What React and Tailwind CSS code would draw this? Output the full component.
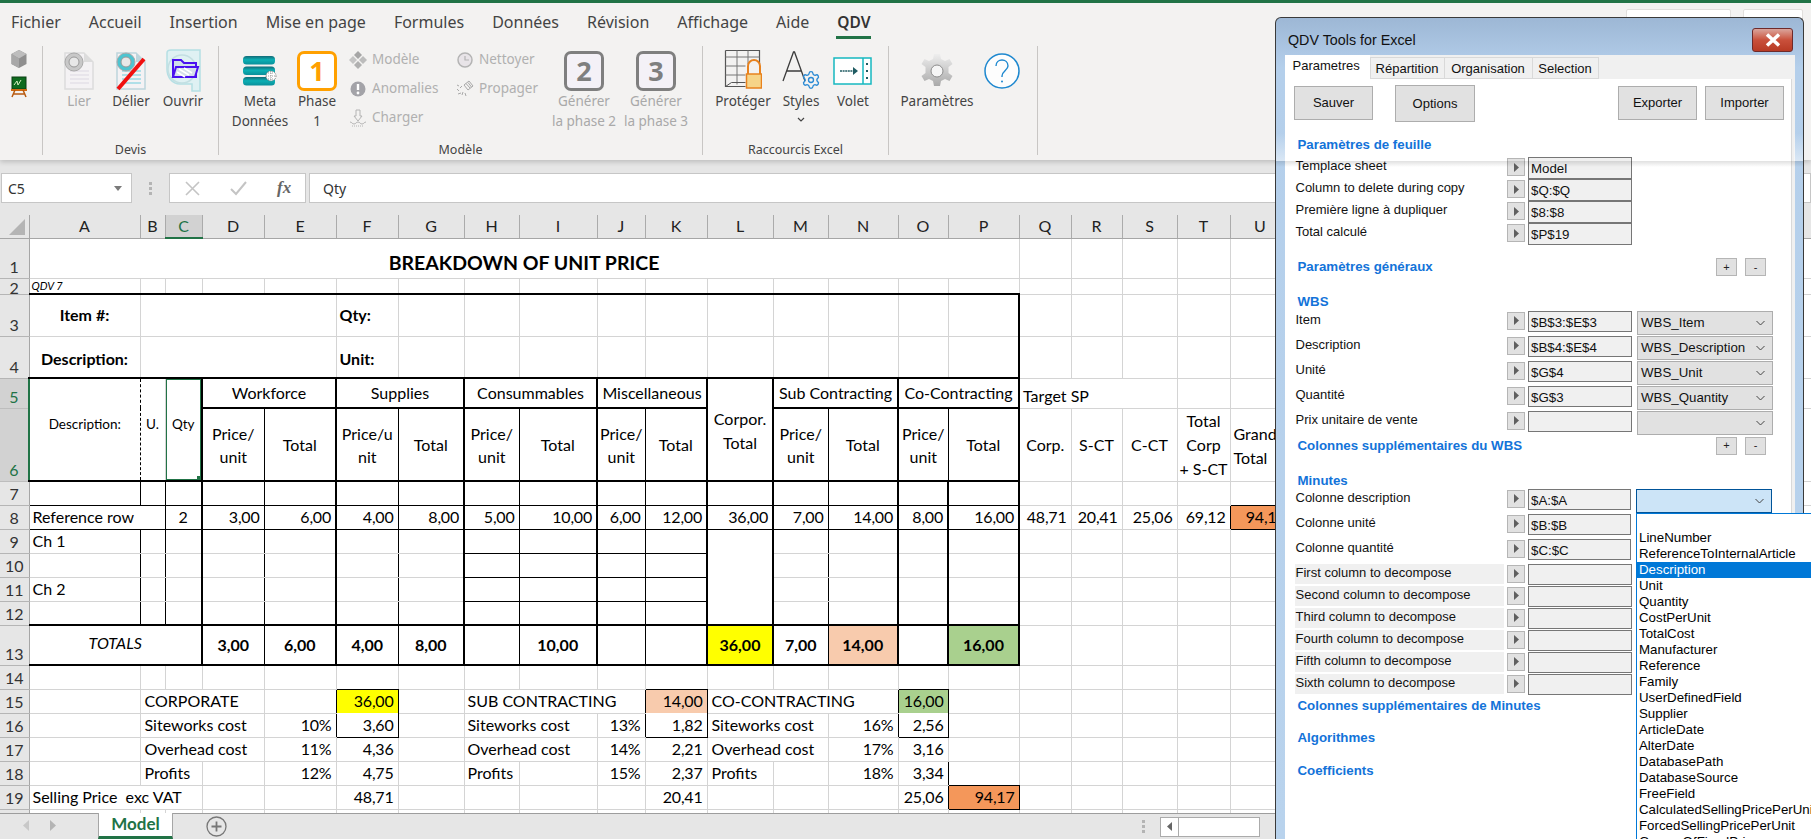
import React from 'react';
import { Settings } from 'lucide-react';

const RB = {
  g: 'border-r border-r-[#d4d4d4]',
  k: 'border-r border-r-black',
  K: 'border-r-2 border-r-black',
  d: 'border-r border-r-black [border-right-style:dashed]',
  n: 'border-r-0',
};
const BB = {
  g: 'border-b border-b-[#d4d4d4]',
  k: 'border-b border-b-black',
  K: 'border-b-2 border-b-black',
  n: 'border-b-0',
};

const cols = [
  ['A', 111], ['B', 25], ['C', 37], ['D', 62], ['E', 72], ['F', 62], ['G', 66], ['H', 55], ['I', 78], ['J', 48], ['K', 62],
  ['L', 66], ['M', 55], ['N', 70], ['O', 50], ['P', 71], ['Q', 52], ['R', 51], ['S', 55], ['T', 53], ['U', 60],
  ['V', 64], ['W', 64], ['X', 64], ['Y', 64], ['Z', 64], ['AA', 64], ['AB', 64], ['AC', 64], ['AD', 64],
];

const NUM = 'text-right pr-[4px] tracking-[-0.2px]';
const CEN = 'text-center';
const BOLD = 'font-bold text-center';

function c(t = '', r = 'g', b = 'g', cls = '', cs = 1, rs = 1, extra = null) {
  return { t, r, b, cls, cs, rs, extra };
}
const blanks = (n, r = 'g', b = 'g') => Array.from({ length: n }, () => c('', r, b));

function Cell({ d }) {
  return (
    <td
      colSpan={d.cs}
      rowSpan={d.rs}
      className={`relative p-0 overflow-hidden whitespace-pre align-middle ${RB[d.r]} ${BB[d.b]} ${d.cls}`}
    >
      {d.t}
      {d.extra}
    </td>
  );
}

function Row({ n, h, sel, cells, tall }) {
  return (
    <tr style={{ height: h }}>
      <td
        className={`p-0 text-center align-bottom leading-[18px] ${
          sel
            ? 'bg-[#d2d2d2] text-[#217346] border-r-2 border-r-[#217346] border-b border-b-[#bdbdbd]'
            : 'bg-[#e6e6e6] text-[#333] border-r border-r-[#a6a6a6] border-b border-b-[#b5b5b5]'
        } ${tall ? 'leading-[14px]' : 'pb-[2px]'} overflow-hidden`}
      >
        <div className="overflow-hidden" style={{ maxHeight: h - 1 }}>{n}</div>
      </td>
      {cells.map((d, i) => <Cell key={i} d={d} />)}
    </tr>
  );
}

const vr = ['k', 'k', 'K', 'k', 'K', 'k', 'K', 'k', 'K', 'k', 'K', 'K', 'k', 'K', 'K', 'K'];
const tail = 14;

const Price = () => <span className="block text-center leading-[23px] whitespace-normal">Price/<br />unit</span>;

const selection = (
  <>
    <span className="absolute -left-[1px] -top-[1px] -right-[1px] -bottom-[1px] border-2 border-[#217346] pointer-events-none" />
    <span className="absolute right-[-1px] bottom-[-1px] w-[5px] h-[5px] bg-[#217346]" />
  </>
);

const rows = [
  { n: 1, h: 40, cells: [c(<span className="relative top-[4px]">BREAKDOWN OF UNIT PRICE</span>, 'g', 'g', 'text-center font-bold text-[19.5px]', 16), ...blanks(tail)] },
  { n: 2, h: 16, tall: true, cells: [c('QDV 7', 'g', 'K', 'italic text-[11px] leading-none pl-[2px]'), ...blanks(15, 'g', 'K'), ...blanks(tail)] },
  { n: 3, h: 42, cells: [c('Item #:', 'g', 'g', BOLD), c('', 'g', 'g', '', 4), c('Qty:', 'g', 'g', 'font-bold pl-[3px]'), ...blanks(9), c('', 'K', 'g'), ...blanks(tail)] },
  { n: 4, h: 42, cells: [c('Description:', 'g', 'K', `${BOLD} pt-[4px]`), c('', 'g', 'K', '', 4), c('Unit:', 'g', 'K', 'font-bold pl-[3px] pt-[4px]'), ...blanks(9, 'g', 'K'), c('', 'K', 'K'), ...blanks(tail)] },
  {
    n: 5, h: 30, sel: true, cells: [
      c('Description:', 'd', 'K', 'text-center text-[13.5px] pb-[9px]', 1, 2),
      c('U.', 'g', 'K', 'text-center text-[13.5px] pb-[9px]', 1, 2),
      c('Qty', 'K', 'K', 'text-center text-[13.5px] pb-[9px]', 1, 2, selection),
      c('Workforce', 'K', 'K', CEN, 2), c('Supplies', 'K', 'K', CEN, 2), c('Consummables', 'K', 'K', CEN, 2), c('Miscellaneous', 'K', 'K', CEN, 2),
      c(<span className="block leading-[24px] whitespace-normal relative top-[1px]">Corpor.<br />Total</span>, 'K', 'K', CEN, 1, 2),
      c('Sub Contracting', 'K', 'K', CEN, 2), c('Co-Contracting', 'K', 'K', CEN, 2),
      c(<span className="relative top-[3px]">Target SP</span>, 'g', 'g', 'pl-[3px]', 3),
      ...blanks(tail - 3),
    ],
  },
  {
    n: 6, h: 71, sel: true, cells: [
      c(<Price />, 'k', 'K'), c('Total', 'K', 'K', CEN),
      c(<span className="block text-center leading-[23px]">Price/u<br />nit</span>, 'k', 'K'), c('Total', 'K', 'K', CEN),
      c(<Price />, 'k', 'K'), c('Total', 'K', 'K', CEN),
      c(<Price />, 'k', 'K'), c('Total', 'K', 'K', CEN),
      c(<Price />, 'k', 'K'), c('Total', 'K', 'K', CEN),
      c(<Price />, 'k', 'K'), c('Total', 'K', 'K', CEN),
      c('Corp.', 'g', 'g', CEN), c('S-CT', 'g', 'g', CEN), c('C-CT', 'g', 'g', CEN),
      c(<span className="block leading-[24px] whitespace-normal">Total<br />Corp<br />+ S-CT</span>, 'g', 'g', CEN),
      c(<span className="block leading-[24px] pl-[3px] relative top-[1px]">Grand<br />Total</span>, 'g', 'g'),
      ...blanks(tail - 5),
    ],
  },
  { n: 7, h: 24, cells: [...vr.map((r) => c('', r, 'k')), ...blanks(4), c('', 'g', 'k'), ...blanks(tail - 5)] },
  {
    n: 8, h: 24, cells: [
      c('Reference row', 'n', 'k', 'pl-[3px]'), c('', 'k', 'k'), c('2', 'K', 'k', CEN),
      ...[['3,00', 'k'], ['6,00', 'K'], ['4,00', 'k'], ['8,00', 'K'], ['5,00', 'k'], ['10,00', 'K'], ['6,00', 'k'], ['12,00', 'K'], ['36,00', 'K'], ['7,00', 'k'], ['14,00', 'K'], ['8,00', 'K'], ['16,00', 'K']].map(([t, r]) => c(t, r, 'k', NUM)),
      c('48,71', 'g', 'g', NUM), c('20,41', 'g', 'g', NUM), c('25,06', 'g', 'g', NUM), c('69,12', 'k', 'g', NUM),
      c('94,17', 'k', 'k', `${NUM} bg-[#f4975a]`),
      ...blanks(tail - 5),
    ],
  },
  ...[9, 10, 11, 12].map((n) => {
    const last = n === 12;
    const b0 = last ? 'K' : 'g';
    const b1 = last ? 'K' : 'k';
    const cells = [];
    vr.forEach((r, i) => {
      if (i === 11) {
        if (n === 9) cells.push(c('', r, 'K', '', 1, 4));
        return;
      }
      const t = i === 0 && n === 9 ? 'Ch 1' : i === 0 && n === 11 ? 'Ch 2' : '';
      cells.push(c(t, r, i >= 7 && i <= 10 ? b1 : b0, 'pl-[3px]'));
    });
    return { n, h: 24, cells: [...cells, ...blanks(tail)] };
  }),
  {
    n: 13, h: 40, cells: [
      c(<span className="relative -top-[2px]">TOTALS</span>, 'K', 'K', 'italic text-center', 3),
      c('3,00', 'k', 'K', BOLD), c('6,00', 'K', 'K', BOLD), c('4,00', 'k', 'K', BOLD), c('8,00', 'K', 'K', BOLD),
      c('', 'k', 'K'), c('10,00', 'K', 'K', BOLD), c('', 'k', 'K'), c('', 'K', 'K'),
      c('36,00', 'K', 'K', `${BOLD} bg-[#ffff00]`), c('7,00', 'k', 'K', BOLD), c('14,00', 'K', 'K', `${BOLD} bg-[#f8cbad]`),
      c('', 'K', 'K'), c('16,00', 'K', 'K', `${BOLD} bg-[#a9d08e]`),
      ...blanks(tail),
    ],
  },
  {
    n: 14, h: 24, cells: [
      ...blanks(5), c('', 'g', 'k'), ...blanks(4), c('', 'g', 'k'), ...blanks(3), c('', 'g', 'k'), ...blanks(1), ...blanks(tail),
    ],
  },
  {
    n: 15, h: 24, cells: [
      c(), c('CORPORATE', 'g', 'g', 'pl-[4px]', 3), c('', 'k'), c('36,00', 'k', 'n', `${NUM} bg-[#ffff00]`), c(),
      c('SUB CONTRACTING', 'k', 'g', 'pl-[3px]', 3), c('14,00', 'k', 'n', `${NUM} bg-[#f8cbad]`),
      c('CO-CONTRACTING', 'k', 'g', 'pl-[4px]', 3), c('16,00', 'k', 'n', `${NUM} bg-[#a9d08e]`), c(), ...blanks(tail),
    ],
  },
  {
    n: 16, h: 24, cells: [
      c(), c('Siteworks cost', 'g', 'g', 'pl-[4px]', 3), c('10%', 'k', 'g', NUM), c('3,60', 'k', 'k', NUM), c(),
      c('Siteworks cost', 'g', 'g', 'pl-[3px]', 2), c('13%', 'k', 'g', NUM), c('1,82', 'k', 'k', NUM),
      c('Siteworks cost', 'g', 'g', 'pl-[4px]', 2), c('16%', 'k', 'g', NUM), c('2,56', 'k', 'k', NUM), c(), ...blanks(tail),
    ],
  },
  {
    n: 17, h: 24, cells: [
      c(), c('Overhead cost', 'g', 'g', 'pl-[4px]', 3), c('11%', 'g', 'g', NUM), c('4,36', 'g', 'g', NUM), c(),
      c('Overhead cost', 'g', 'g', 'pl-[3px]', 2), c('14%', 'g', 'g', NUM), c('2,21', 'g', 'g', NUM),
      c('Overhead cost', 'g', 'g', 'pl-[4px]', 2), c('17%', 'g', 'g', NUM), c('3,16', 'g', 'g', NUM), c(), ...blanks(tail),
    ],
  },
  {
    n: 18, h: 24, cells: [
      c(), c('Profits', 'g', 'g', 'pl-[4px]', 2), c(), c('12%', 'g', 'g', NUM), c('4,75', 'g', 'g', NUM), c(),
      c('Profits', 'g', 'g', 'pl-[3px]'), c(), c('15%', 'g', 'g', NUM), c('2,37', 'g', 'g', NUM),
      c('Profits', 'g', 'g', 'pl-[4px]'), c(), c('18%', 'g', 'g', NUM), c('3,34', 'k', 'g', NUM), c('', 'g', 'k'), ...blanks(tail),
    ],
  },
  {
    n: 19, h: 24, cells: [
      c('Selling Price  exc VAT', 'g', 'g', 'pl-[3px]', 3), c(), c(), c('48,71', 'g', 'g', NUM), ...blanks(4), c('20,41', 'g', 'g', NUM),
      c(), c(), c(), c('25,06', 'k', 'g', NUM), c('94,17', 'k', 'k', `${NUM} bg-[#f4975a]`), ...blanks(tail),
    ],
  },
  { n: 20, h: 6, tall: true, cells: blanks(30, 'g', 'n') },
];

function Sheet() {
  return (
    <div className="h-[598px] overflow-hidden bg-white">
      <table className="table-fixed border-collapse w-[1781px] font-[Lato,sans-serif] text-[16px] text-black leading-none">
        <colgroup>
          <col className="w-[29px]" />
          {cols.map(([k, w]) => <col key={k} style={{ width: w }} />)}
        </colgroup>
        <tbody>
          <tr className="h-[23px]">
            <td className="p-0 bg-[#e6e6e6] border-r border-r-[#a6a6a6] border-b border-b-[#a6a6a6] relative">
              <svg className="absolute right-[4px] bottom-[3px]" width="16" height="16" viewBox="0 0 16 16"><path d="M16 0V16H0Z" fill="#b4b4b4" /></svg>
            </td>
            {cols.map(([k]) => (
              <td key={k} className={`p-0 text-center text-[16px] ${k === 'C' ? 'bg-[#d2d2d2] text-[#217346] border-r border-r-[#ababab] border-b-2 border-b-[#217346]' : 'bg-[#e6e6e6] text-[#222] border-r border-r-[#ababab] border-b border-b-[#a6a6a6]'}`}>{k}</td>
            ))}
          </tr>
          {rows.map((r) => <Row key={r.n} {...r} />)}
        </tbody>
      </table>
    </div>
  );
}

/* ------- ribbon icons ------- */
const Cube = () => (
  <svg width="18" height="20" viewBox="0 0 18 20"><path d="M9 1 16.5 5v10L9 19 1.5 15V5Z" fill="#8f8f8f" /><path d="M9 1 16.5 5 9 9.5 1.5 5Z" fill="#bdbdbd" /><path d="M9 9.5V19L1.5 15V5Z" fill="#a8a8a8" /></svg>
);
const Board = () => (
  <svg width="18" height="22" viewBox="0 0 18 22"><rect x="2" y="1" width="14" height="12" fill="#0f6b1f" stroke="#0a3f13" /><path d="M4 9 7 5l1 4 3-5" stroke="#d8f0c0" fill="none" strokeWidth="1" /><path d="M1 14h16" stroke="#d06a10" strokeWidth="2" /><path d="M5 14 2 21M13 14l3 7M3 18h12" stroke="#b85a10" strokeWidth="1.5" fill="none" /></svg>
);
const DocIcon = ({ tint = '#dcdcdc', globe = '#c8c8c8', lines = '#e4e0e8', strike }) => (
  <svg width="34" height="40" viewBox="0 0 34 40">
    <path d="M3 2h19l9 9v27H3Z" fill="#f4f2f4" stroke={tint} strokeWidth="1.5" />
    <path d="M22 2v9h9Z" fill={tint} />
    {[20, 24, 28, 32].map((y) => <path key={y} d={`M8 ${y}h19`} stroke={lines} strokeWidth="1.5" />)}
    <circle cx="12" cy="11" r="9" fill={globe} stroke="#aaa" />
    <circle cx="12" cy="11" r="5" fill="#e8e8e8" stroke="#999" />
    {strike && <path d="M4 38 30 8" stroke="#f01010" strokeWidth="4" />}
  </svg>
);
const OpenIcon = () => (
  <svg width="38" height="44" viewBox="0 0 38 44">
    <path d="M3 4C3 1 5 1 7 1h29v41h-8v-7H16C8 35 3 28 3 20Z" fill="#dff1f3" stroke="#b5dfe4" strokeWidth="1.5" />
    <circle cx="18" cy="20" r="14" fill="none" stroke="#c3dfe2" strokeWidth="1.5" />
    <path d="M9 11h8l3 3h12v14H9Z" fill="#cfe0e8" stroke="#4a10f0" strokeWidth="2" />
    <path d="M9 28l3-10h22l-3 10Z" fill="#d5dfea" stroke="#4a10f0" strokeWidth="2" />
    <path d="M15 20l10 6M13 23l8 5M20 19l8 5" stroke="#fff" strokeWidth="1.5" />
  </svg>
);
const MetaIcon = () => (
  <svg width="36" height="32" viewBox="0 0 36 32">
    <defs>
      <linearGradient id="meta" x1="0" y1="0" x2="0" y2="1"><stop offset="0" stopColor="#136a77" /><stop offset=".45" stopColor="#0bb0b4" /><stop offset="1" stopColor="#0a8f9a" /></linearGradient>
    </defs>
    {[1, 11.5, 22].map((y) => <rect key={y} x="1" y={y} width="32" height="8.5" rx="3.5" fill="url(#meta)" />)}
    <circle cx="29" cy="21" r="5" fill="#fff" stroke="#777" strokeDasharray="1 1" />
    <path d="M24 21h10M29 16v10M26 18h6M26 24h6" stroke="#777" strokeWidth=".7" strokeDasharray="1 1" />
  </svg>
);
const Phase = ({ n, on }) => (
  <div className={`w-[40px] h-[40px] rounded-[7px] border-[3px] flex items-center justify-center font-bold text-[27px] leading-none font-['Open_Sans',sans-serif] ${on ? 'border-[#ffa000] bg-white text-[#ffa000]' : 'border-[#7f7f7f] bg-[#f4f1f7] text-[#7f7f7f]'}`}>{n}</div>
);
const Diamonds = () => (
  <svg width="18" height="18" viewBox="0 0 18 18" fill="#b9b9b9"><path d="M9 0l4 4-4 4-4-4Z" fill="#a6a6a6" /><path d="M4 5l4 4-4 4-4-4Z" fill="#c4c4c4" /><path d="M14 5l4 4-4 4-4-4Z" fill="#bcbcbc" /><path d="M9 10l4 4-4 4-4-4Z" fill="#b0b0b0" /></svg>
);
const Excl = () => (
  <svg width="16" height="16" viewBox="0 0 16 16"><circle cx="8" cy="8" r="7.5" fill="#a3a3a8" /><path d="M8 3v6" stroke="#fff" strokeWidth="2.4" /><circle cx="8" cy="12" r="1.4" fill="#fff" /></svg>
);
const Charge = () => (
  <svg width="18" height="18" viewBox="0 0 18 18" fill="none" stroke="#b4b4b4"><path d="M7 1h4v6h2l-4 5-4-5h2Z" /><path d="M1 13c2 0 2 2 4 2s2-2 4-2 2 2 4 2 2-2 4-2" /><path d="M3 17h12" strokeDasharray="1 1" /></svg>
);
const Clock = () => (
  <svg width="16" height="16" viewBox="0 0 16 16"><circle cx="8" cy="8" r="7" fill="#e8e4e8" stroke="#b4b4b4" strokeWidth="1.5" /><path d="M8 4v4h4" stroke="#b4b4b4" fill="none" strokeWidth="1.2" /></svg>
);
const Scatter = () => (
  <svg width="18" height="18" viewBox="0 0 18 18" fill="none" stroke="#a8a8a8"><path d="M8 5l5-4 4 5-5 4ZM10 3.5l4 4.5M12 2.5l3.5 4.5" /><path d="M1 9l2 2M4 8l2-2M2 14l3-1M7 12l-1 3M9 13l1 3M1 5l2 1" /></svg>
);
const Protect = () => (
  <svg width="38" height="44" viewBox="0 0 38 44">
    <path d="M2 2h34v18H24v14H8l-6 6Z" fill="#f3f2f1" />
    <path d="M1.500 1.500h34v14M1.500 1.500v36h20" fill="none" stroke="#555" strokeWidth="1.2" />
    <path d="M1.500 8h34M1.500 17h20M1.500 26h20M13 1.500v34M24 1.500v14" stroke="#777" strokeWidth="1" fill="none" />
    <path d="M1.500 37.500l6-4h14" stroke="#555" fill="none" />
    <path d="M24 25v-8a6 6 0 0 1 12 0v8" fill="none" stroke="#e8821e" strokeWidth="2" />
    <rect x="22.500" y="25" width="15" height="14" fill="#f6d488" stroke="#e8821e" strokeWidth="1.5" />
  </svg>
);
const StylesIcon = () => (
  <div className="relative w-[38px] h-[38px] -mt-[2px]">
    <svg className="absolute left-0 top-0" width="24" height="31" viewBox="0 0 24 31">
      <path d="M1 30 11.500 1h1L23 30M5 20h14" fill="none" stroke="#3c3c3c" strokeWidth="1.300" />
    </svg>
    <Settings className="absolute -right-[1px] -bottom-[1px] text-[#2a8ad4]" size={20} strokeWidth={1.6} />
  </div>
);
const VoletIcon = () => (
  <svg width="40" height="28" viewBox="0 0 40 28">
    <rect x="1" y="1" width="37" height="26" fill="#fff" stroke="#16b8c0" strokeWidth="1.500" />
    <path d="M30 1v26" stroke="#16b8c0" strokeWidth="1.500" />
    <path d="M7 14h16" stroke="#1f5b62" strokeWidth="1.500" strokeDasharray="2 .6" />
    <path d="M20 10l5 4-5 4Z" fill="#1f5b62" />
    <path d="M34 6v2M34 13v2M34 20v2" stroke="#1f5b62" strokeWidth="2" />
  </svg>
);
const GearIcon = () => (
  <svg width="32" height="36" viewBox="0 0 32 36">
    <defs><linearGradient id="gear" x1="0" y1="0" x2="0" y2="1"><stop offset="0" stopColor="#eeeeee" /><stop offset="1" stopColor="#a9a9a9" /></linearGradient></defs>
    <path d="M13 1h6l1 5 4 2 4.500-2 3 5-4 3v6l4 3-3 5-4.500-2-4 2-1 5h-6l-1-5-4-2-4.500 2-3-5 4-3v-6l-4-3 3-5L8 8l4-2Z" fill="url(#gear)" />
    <circle cx="16" cy="18" r="6" fill="#f5f5f5" stroke="#8d8d8d" />
  </svg>
);
const HelpIcon = () => (
  <svg width="36" height="36" viewBox="0 0 36 36">
    <circle cx="18" cy="18" r="17" fill="#fdfdfd" stroke="#1e88cf" strokeWidth="1.500" />
    <path d="M12 13c0-4 3-6 6-6s6 2 6 6c0 4-6 5-6 10v1" fill="none" stroke="#1e88cf" strokeWidth="1.400" />
    <circle cx="18" cy="28.500" r="1" fill="#1e88cf" />
  </svg>
);

/* ------- ribbon ------- */
const Big = ({ icon, lines, w, dim }) => (
  <div className={`flex flex-col items-center shrink-0 ${w} ${dim ? 'text-[#a9a9a9]' : 'text-[#444]'}`}>
    <div className="h-[45px] flex items-center justify-center pt-[4px]">{icon}</div>
    {lines.map((l, i) => <div key={i} className="h-[20px] leading-[20px] whitespace-nowrap">{l}</div>)}
  </div>
);
const Small = ({ icon, text }) => (
  <div className="flex items-center h-[29px]">
    <div className="w-[18px] flex justify-center mr-[5px]">{icon}</div>
    <span className="text-[#b0b0b0] whitespace-nowrap">{text}</span>
  </div>
);
const Group = ({ w, label, children, lead = '' }) => (
  <div className={`${w} h-[109px] shrink-0 border-r border-r-[#c8c6c4] flex flex-col`}>
    <div className={`flex flex-1 min-h-0 ${lead}`}>{children}</div>
    {label && <div className="h-[16px] -mb-[3px] text-center text-[12.5px] text-[#444] leading-[16px]">{label}</div>}
  </div>
);

const tabs = ['Fichier', 'Accueil', 'Insertion', 'Mise en page', 'Formules', 'Données', 'Révision', 'Affichage', 'Aide'];

function Ribbon() {
  return (
    <div className="h-[160px] bg-[#f3f2f1] font-['Noto_Sans',sans-serif] relative z-10 shadow-[0_2px_5px_rgba(0,0,0,0.18)]">
      <div className="h-[3px] bg-[#217346]" />
      <div className="flex items-start gap-[28px] pl-[11px] h-[36px] text-[16px] text-[#444] pt-[8px] leading-[22px]">
        {tabs.map((t) => <span key={t}>{t}</span>)}
        <span className="font-semibold text-[#333] border-b-[3px] border-b-[#217346] h-[28px] -ml-[1px] px-[1px] text-[15.5px]">QDV</span>
      </div>
      <div className="flex pt-[7px] text-[13.500px]">
        <Group w="w-[43px]">
          <div className="flex flex-col items-center w-full pt-[3px] gap-[7px] pl-[2px] pr-[6px]"><Cube /><Board /></div>
        </Group>
        <Group w="w-[176px]" label="Devis" lead="pl-[10px]">
          <Big w="w-[52px]" dim icon={<DocIcon />} lines={['Lier']} />
          <Big w="w-[52px]" icon={<DocIcon tint="#bdd5dc" globe="#4ec4d0" lines="#9ad8e4" strike />} lines={['Délier']} />
          <Big w="w-[52px]" icon={<OpenIcon />} lines={['Ouvrir']} />
        </Group>
        <Group w="w-[484px]" label="Modèle" lead="pl-[9px]">
          <Big w="w-[64px]" icon={<MetaIcon />} lines={['Meta', 'Données']} />
          <Big w="w-[50px]" icon={<Phase n="1" on />} lines={['Phase', '1']} />
          <div className="w-[114px] pl-[7px] -mt-[1px] shrink-0">
            <Small icon={<Diamonds />} text="Modèle" />
            <Small icon={<Excl />} text="Anomalies" />
            <Small icon={<Charge />} text="Charger" />
          </div>
          <div className="w-[92px] -mt-[1px] shrink-0">
            <Small icon={<Clock />} text="Nettoyer" />
            <Small icon={<Scatter />} text="Propager" />
          </div>
          <Big w="w-[72px]" dim icon={<Phase n="2" />} lines={['Générer', 'la phase 2']} />
          <Big w="w-[72px]" dim icon={<Phase n="3" />} lines={['Générer', 'la phase 3']} />
        </Group>
        <Group w="w-[186px]" label="Raccourcis Excel" lead="pl-[8px]">
          <Big w="w-[64px]" icon={<Protect />} lines={['Protéger']} />
          <Big w="w-[52px]" icon={<StylesIcon />} lines={['Styles', <svg key="c" className="block mx-auto mt-[6px]" width="8" height="6" viewBox="0 0 8 6" fill="none" stroke="#444" strokeWidth="1.200"><path d="M1 1l3 3 3-3" /></svg>]} />
          <Big w="w-[52px]" icon={<VoletIcon />} lines={['Volet']} />
        </Group>
        <Group w="w-[149px]" lead="pl-[10px]">
          <Big w="w-[76px]" icon={<GearIcon />} lines={['Paramètres']} />
          <Big w="w-[54px]" icon={<HelpIcon />} lines={[]} />
        </Group>
        <div className="flex-1 flex justify-end items-start -mt-[36px] pr-[8px] gap-[12px]">
          <div className="w-[105px] h-[20px] bg-white border border-[#e1dfdd] rounded-[2px] -mt-[1px]" />
          <div className="w-[60px] h-[20px] bg-white border border-[#e1dfdd] rounded-[2px] -mt-[1px]" />
        </div>
      </div>
    </div>
  );
}

function FormulaBar() {
  return (
    <div className="h-[55px] bg-[#e6e6e6] pt-[13px] flex items-start font-['Noto_Sans',sans-serif] text-[14px] text-[#333] pl-[1px]">
      <div className="w-[131px] h-[30px] bg-white border border-[#c6c6c6] flex items-center justify-between pl-[6px] pr-[9px]">
        <span>C5</span>
        <svg width="8" height="5" viewBox="0 0 8 5"><path d="M0 0h8L4 5Z" fill="#7a7a7a" /></svg>
      </div>
      <div className="w-[37px] h-[30px] flex flex-col items-center justify-center gap-[2px]">
        <span className="w-[3px] h-[3px] bg-[#b4b4b4]" /><span className="w-[3px] h-[3px] bg-[#b4b4b4]" /><span className="w-[3px] h-[3px] bg-[#b4b4b4]" />
      </div>
      <div className="w-[137px] h-[30px] bg-white border border-[#c6c6c6] flex items-center pl-[15px] gap-[30px]">
        <svg width="15" height="15" viewBox="0 0 15 15" fill="none" stroke="#c4c4c4" strokeWidth="1.600"><path d="M1 1l13 13M14 1 1 14" /></svg>
        <svg width="17" height="15" viewBox="0 0 17 15" fill="none" stroke="#c4c4c4" strokeWidth="2"><path d="M1 8l5 5L16 1" /></svg>
        <span className="font-['Liberation_Serif',serif] italic font-bold text-[17px] text-[#666]">fx</span>
      </div>
      <div className="ml-[3px] flex-1 h-[30px] bg-white border border-[#c6c6c6] flex items-center pl-[13px]">Qty</div>
    </div>
  );
}

function BottomBar() {
  return (
    <div className="h-[26px] bg-[#e6e6e6] border-t border-t-[#9d9d9d] flex items-stretch font-[Lato,sans-serif]">
      <div className="w-[98px] flex items-center pl-[23px] gap-[21px] pb-[2px]">
        <svg width="6" height="11" viewBox="0 0 6 11"><path d="M6 0v11L0 5.500Z" fill="#c8c8c8" /></svg>
        <svg width="6" height="11" viewBox="0 0 6 11"><path d="M0 0v11l6-5.500Z" fill="#b4b4b4" /></svg>
      </div>
      <div className="w-[75px] bg-white border-x border-x-[#a6a6a6] border-b-[3px] border-b-[#217346] -mt-[1px] flex items-center justify-center font-bold text-[17px] text-[#217346] pb-[2px]">Model</div>
      <div className="w-[87px] flex items-center pl-[33px]">
        <svg width="21" height="21" viewBox="0 0 21 21" fill="none" stroke="#777" strokeWidth="1.300"><circle cx="10.500" cy="10.500" r="9.500" /><path d="M10.500 5.500v10M5.500 10.500h10" strokeWidth="1.800" /></svg>
      </div>
      <div className="flex-1 flex items-center justify-end pr-[551px]">
        <div className="flex flex-col gap-[2px] mr-[15px]"><span className="w-[3px] h-[3px] bg-[#b4b4b4]" /><span className="w-[3px] h-[3px] bg-[#b4b4b4]" /><span className="w-[3px] h-[3px] bg-[#b4b4b4]" /></div>
        <div className="w-[100px] h-[20px] bg-white border border-[#ababab] flex">
          <div className="w-[18px] border-r border-r-[#ababab] flex items-center justify-center"><svg width="5" height="9" viewBox="0 0 5 9"><path d="M5 0v9L0 4.500Z" fill="#666" /></svg></div>
        </div>
      </div>
    </div>
  );
}

/* ------- dialog ------- */
const Arrow = () => (
  <div className="w-[18px] h-[18px] shrink-0 bg-[#e1e1e1] border border-[#b5b5b5] flex items-center justify-center">
    <svg width="5" height="9" viewBox="0 0 5 9"><path d="M0 0l5 4.500L0 9Z" fill="#5f5f5f" /></svg>
  </div>
);
const Input = ({ v, narrow }) => (
  <div className={`${narrow ? 'w-[103px]' : 'w-[104px]'} h-[21.500px] shrink-0 ml-[3px] bg-[#f0f0f0] border border-[#767676] pl-[2px] leading-[21px] text-[13.300px] whitespace-nowrap overflow-hidden`}>{v}</div>
);
const Chevron = () => (
  <svg width="9" height="6" viewBox="0 0 9 6" fill="none" stroke="#444" strokeWidth="1"><path d="M.5 1 4.500 5l4-4" /></svg>
);
const items = ['', 'LineNumber', 'ReferenceToInternalArticle', 'Description', 'Unit', 'Quantity', 'CostPerUnit', 'TotalCost', 'Manufacturer', 'Reference', 'Family', 'UserDefinedField', 'Supplier', 'ArticleDate', 'AlterDate', 'DatabasePath', 'DatabaseSource', 'FreeField', 'CalculatedSellingPricePerUnit', 'ForcedSellingPricePerUnit', 'GroupsOfFixedPrice'];

const Select = ({ v, active }) => (
  <div className={`relative w-[136px] h-[24px] ml-[5px] shrink-0 flex items-center justify-between pl-[3px] pr-[7px] text-[13.300px] ${active ? 'bg-[#cce4f7] border border-[#005499]' : 'bg-[#e1e1e1] border border-[#adadad]'}`}>
    <span className="whitespace-nowrap">{v}</span>
    <Chevron />
    {active && (
      <div className="absolute left-[-1px] top-[23px] w-[180px] h-[330px] bg-white border border-[#0078d7] z-20 overflow-hidden pl-[1px]">
        {items.map((t, i) => (
          <div key={i} className={`h-[16px] leading-[16px] whitespace-nowrap -ml-[1px] pl-[2px] ${t === 'Description' ? 'bg-[#0078d7] text-white' : 'text-black'}`}>{t}</div>
        ))}
      </div>
    )}
  </div>
);

const Head = ({ t, cls = '', btns }) => (
  <div className={`flex items-center pl-[13px] pr-[25px] font-bold text-[13.300px] text-[#1373d9] leading-none ${cls}`}>
    <span className="flex-1">{t}</span>
    {btns && (
      <div className="flex gap-[8px] text-[#222] font-normal text-[11px]">
        <div className="w-[21px] h-[18px] bg-[#e1e1e1] border border-[#b5b5b5] flex items-center justify-center">+</div>
        <div className="w-[21px] h-[18px] bg-[#e1e1e1] border border-[#b5b5b5] flex items-center justify-center">-</div>
      </div>
    )}
  </div>
);

const FormRow = ({ label, v, sel, h = 'h-[22px]', shade, narrow, active, noSel }) => (
  <div className={`flex items-start ${h} pl-[10px]`}>
    <div className={`w-[209px] h-[20px] shrink-0 pl-[1px] leading-[16px] whitespace-nowrap ${shade ? 'bg-[#f0f0f0] pt-[1px]' : 'mt-[1px]'}`}>{label}</div>
    <div className="w-[3.500px]" />
    <div className="pt-[1px]"><Arrow /></div>
    <Input v={v} narrow={narrow} />
    {!noSel && <Select v={sel} active={active} />}
  </div>
);

const Btn = ({ t, w = 'w-[79px]', h = 'h-[34px]', cls = '' }) => (
  <div className={`${w} ${h} bg-[#e1e1e1] border border-[#adadad] flex items-center justify-center ${cls}`}>{t}</div>
);

function Dialog() {
  return (
    <div className="absolute left-[1275px] top-[17px] w-[529px] h-[822px] rounded-t-[6px] border border-[#3a3a3a] border-b-0 bg-gradient-to-b from-[#9db7d5] via-[#b4cfeb] via-[6%] to-[#b9d3ed] font-['Liberation_Sans',sans-serif] text-[13px] text-[#111] z-20">
      <div className="h-[37px] flex items-start pl-[12px] pr-[10px] relative">
        <span className="text-[14.300px] text-[#111] mt-[14px] leading-[16px]">QDV Tools for Excel</span>
        <div className="ml-auto mt-[10px] w-[41px] h-[24px] rounded-[3px] border border-[#6e2a2a] bg-gradient-to-b from-[#d9a49c] via-[#c9503b] via-[50%] to-[#b83a24] flex items-center justify-center">
          <svg width="16" height="14" viewBox="0 0 16 14"><path d="M2 1.500l12 11M14 1.500l-12 11" stroke="#fff" strokeWidth="3.500" /></svg>
        </div>
      </div>
      <div className="ml-[8.500px] mr-[8px] h-[785px] bg-[#f0f0f0] flex flex-col">
        <div className="flex items-end h-[24px] text-[13px] shrink-0">
          <div className="w-[85px] h-[24px] bg-white pl-[8px] pb-[3px] leading-[16px] flex items-center z-10">Parametres</div>
          <div className="w-[75px] h-[22px] border border-[#d9d9d9] flex items-center justify-center pt-[1px]">Répartition</div>
          <div className="w-[88px] h-[22px] border border-[#d9d9d9] border-l-0 flex items-center justify-center pt-[1px]">Organisation</div>
          <div className="w-[66px] h-[22px] border border-[#d9d9d9] border-l-0 flex items-center justify-center pt-[1px]">Selection</div>
        </div>
        <div className="flex-1 bg-white border-r border-r-[#d9d9d9] mr-[3px]">
          <div className="flex items-start pl-[9.500px] pr-[7px] mt-[7px] h-[37px]">
            <Btn t="Sauver" />
            <Btn t="Options" w="w-[80px]" h="h-[37px]" cls="ml-[22px] -mt-[1px]" />
            <div className="flex-1" />
            <Btn t="Exporter" />
            <Btn t="Importer" cls="ml-[8px]" />
          </div>
          <Head t="Paramètres de feuille" cls="h-[22px] mt-[12px] pb-[2px]" />
          <FormRow label="Templace sheet" v="Model" noSel />
          <FormRow label="Column to delete during copy" v="$Q:$Q" noSel />
          <FormRow label="Première ligne à dupliquer" v="$8:$8" noSel />
          <FormRow label="Total calculé" v="$P$19" noSel />
          <Head t="Paramètres généraux" btns cls="h-[20px] mt-[12px]" />
          <Head t="WBS" cls="h-[20px] mt-[13.500px] pt-[2px]" />
          <FormRow h="h-[25px]" label="Item" v="$B$3:$E$3" sel="WBS_Item" />
          <FormRow h="h-[25px]" label="Description" v="$B$4:$E$4" sel="WBS_Description" />
          <FormRow h="h-[25px]" label="Unité" v="$G$4" sel="WBS_Unit" />
          <FormRow h="h-[25px]" label="Quantité" v="$G$3" sel="WBS_Quantity" />
          <FormRow h="h-[25px]" label="Prix unitaire de vente" v="" sel="" />
          <Head t="Colonnes supplémentaires du WBS" btns cls="h-[18px] pt-[2px]" />
          <Head t="Minutes" cls="h-[17px] mt-[18px] pt-[2px]" />
          <FormRow h="h-[25px]" narrow active label="Colonne description" v="$A:$A" sel="" />
          <FormRow h="h-[25px]" narrow noSel label="Colonne unité" v="$B:$B" />
          <FormRow h="h-[25px]" narrow noSel label="Colonne quantité" v="$C:$C" />
          <FormRow shade noSel label="First column to decompose" v="" />
          <FormRow shade noSel label="Second column to decompose" v="" />
          <FormRow shade noSel label="Third column to decompose" v="" />
          <FormRow shade noSel label="Fourth column to decompose" v="" />
          <FormRow shade noSel label="Fifth column to decompose" v="" />
          <FormRow shade noSel label="Sixth column to decompose" v="" />
          <Head t="Colonnes supplémentaires de Minutes" cls="h-[18px] pt-[2px]" />
          <Head t="Algorithmes" cls="h-[18px] mt-[14px] pt-[2px]" />
          <Head t="Coefficients" cls="h-[18px] mt-[15px] pt-[2px]" />
        </div>
      </div>
      <div className="absolute left-0 w-[9px] top-[115px] h-[28px] bg-gradient-to-b from-transparent to-white/50 pointer-events-none z-30" />
      <div className="absolute right-0 w-[9px] top-[115px] h-[28px] bg-gradient-to-b from-transparent to-white/50 pointer-events-none z-30" />
      <div className="absolute left-0 right-0 top-[143px] h-[6px] bg-gradient-to-b from-black/12 to-transparent pointer-events-none z-30" />
    </div>
  );
}

export default function App() {
  return (
    <div className="relative w-[1811px] h-[839px] overflow-hidden bg-white">
      <Ribbon />
      <FormulaBar />
      <Sheet />
      <BottomBar />
      <Dialog />
    </div>
  );
}
